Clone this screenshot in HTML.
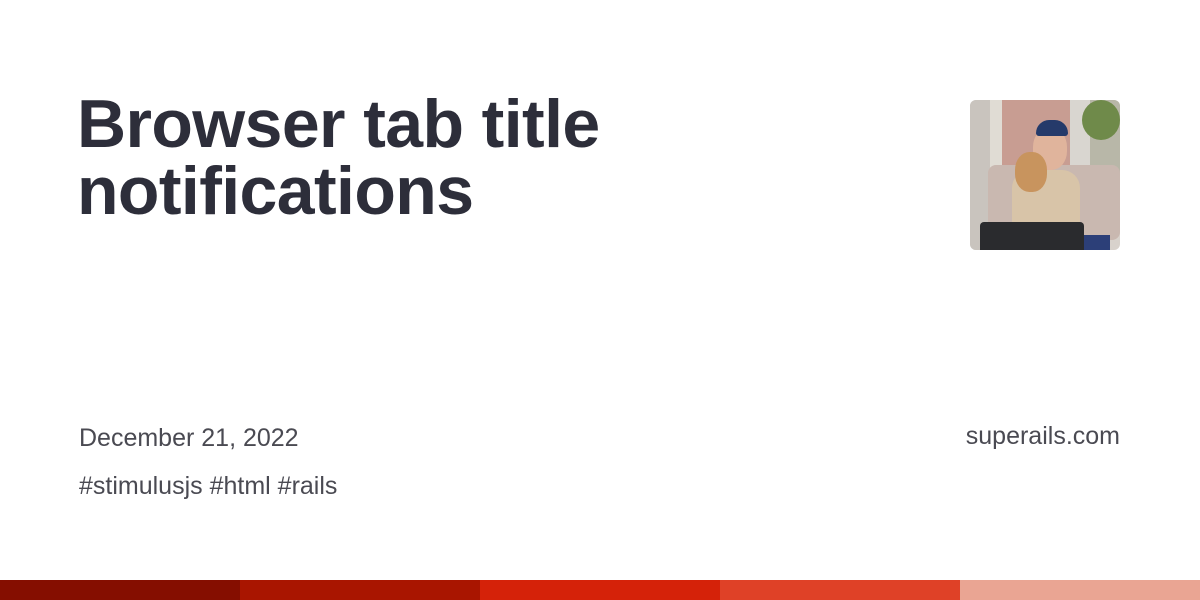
<!DOCTYPE html>
<html><head><meta charset="utf-8"><style>
*{margin:0;padding:0;box-sizing:border-box}
body{width:1200px;height:600px;background:#fff;position:relative;overflow:hidden;font-family:"Liberation Sans",Arial,sans-serif}
h1{position:absolute;left:77px;top:91px;font-size:68px;line-height:67px;font-weight:bold;color:#2d2e3a;letter-spacing:-0.6px}
.d{position:absolute;left:79px;top:424px;font-size:25px;color:#4a4a52}
.t{position:absolute;left:79px;top:472px;font-size:25px;color:#4a4a52}
.s{position:absolute;right:80px;top:422px;font-size:25px;color:#4a4a52}
.bar{position:absolute;left:0;top:580px;width:1200px;height:20px;display:flex}
.bar div{flex:1}
.ph{position:absolute;left:970px;top:100px;width:150px;height:150px;border-radius:6px;overflow:hidden;background:#d8d2cc}
.ph div{position:absolute}
</style></head><body>
<h1>Browser tab title<br>notifications</h1>
<div class="d">December 21, 2022</div>
<div class="t">#stimulusjs #html #rails</div>
<div class="s">superails.com</div>
<div class="ph">
<div style="left:0;top:0;width:20px;height:150px;background:#c9c4be"></div>
<div style="left:20px;top:0;width:12px;height:80px;background:#e0dcd4"></div>
<div style="left:32px;top:0;width:68px;height:75px;background:#c89d92"></div>
<div style="left:100px;top:0;width:20px;height:75px;background:#d9d6d0"></div>
<div style="left:120px;top:0;width:30px;height:75px;background:#b8b7a8"></div>
<div style="left:112px;top:0;width:38px;height:40px;background:#6f8a4a;border-radius:50%"></div>
<div style="left:18px;top:65px;width:132px;height:75px;background:#c9b8b0;border-radius:8px"></div>
<div style="left:42px;top:70px;width:68px;height:70px;background:#d8c4a8;border-radius:18px 18px 0 0"></div>
<div style="left:63px;top:28px;width:34px;height:42px;background:#e0b49c;border-radius:45%"></div>
<div style="left:66px;top:20px;width:32px;height:16px;background:#253a6a;border-radius:14px 14px 3px 3px"></div>
<div style="left:45px;top:52px;width:32px;height:40px;background:#c8945e;border-radius:45%"></div>
<div style="left:10px;top:122px;width:104px;height:28px;background:#2a2b2e;border-radius:4px 4px 0 0"></div>
<div style="left:114px;top:135px;width:26px;height:15px;background:#2c3f78"></div>
</div>
<div class="bar"><div style="background:#850e00"></div><div style="background:#a91500"></div><div style="background:#d52209"></div><div style="background:#df4127"></div><div style="background:#eaa593"></div></div>
</body></html>
